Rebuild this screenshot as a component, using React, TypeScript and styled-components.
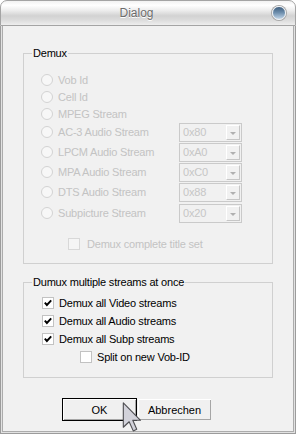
import React from 'react';
import styled, {createGlobalStyle} from "styled-components";

const GlobalStyle = createGlobalStyle`
    html, body {
        margin: 0;
        padding: 0;
        background: #ffffff;
    }
    body {
        font-family: "Liberation Sans", Arial, sans-serif;
        font-size: 11px;
        letter-spacing: -0.2px;
    }
`
const Window = styled.div`
    position: relative;
    width: 296px;
    height: 434px;
    display: flex;
    flex-direction: column;
`
const TitleBar = styled.div`
    height: 24px;
    flex-shrink: 0;
    display: flex;
    align-items: center;
    padding: 0 9px 0 0;
    border: 1px solid #a4a4a4;
    border-radius: 7px 7px 0 0;
    background: linear-gradient(to bottom, #f2f2f2 0%, #ffffff 18%, #ececec 40%, #d2d2d2 62%, #dcdcdc 80%, #eeeeee 100%);
`
const Title = styled.span`
    flex: 1;
    text-align: center;
    font-size: 12px;
    letter-spacing: 0;
    color: #6c6c6c;
    text-shadow: 0 1px 0 #ffffff;
`
const CloseButton = styled.span`
    width: 14px;
    height: 14px;
    box-sizing: border-box;
    border-radius: 50%;
    border: 1px solid #eef2f6;
    box-shadow: 0 0 0 1px #a8a8a8;
    background: linear-gradient(to bottom, #3e5d7c 0%, #6b8cab 45%, #a9c1d8 85%, #c9d8e6 100%);
`
const Body = styled.div`
    flex: 1;
    display: flex;
    flex-direction: column;
    background: #f1f1f1;
    border: 1px solid #9c9c9c;
    border-top: none;
    box-shadow: inset 1px 0 #e2e2e2, inset -1px 0 #e2e2e2, inset 0 -1px #e2e2e2,
    inset 2px 0 #acacac, inset -2px 0 #acacac, inset 0 -2px #acacac;
    padding: 27px 22px 0 22px;
`
const Group = styled.div<{ $pt: number; $pb: number; $pl: number; $mt?: number }>`
    position: relative;
    border: 1px solid #d0d0d0;
    margin-top: ${p => p.$mt || 0}px;
    padding: ${p => p.$pt}px 0 ${p => p.$pb}px ${p => p.$pl}px;
    display: flex;
    flex-direction: column;
`
const Legend = styled.span`
    position: absolute;
    top: -7px;
    left: 8px;
    padding: 0 1px;
    line-height: 13px;
    background: #f1f1f1;
    color: #000;
`
const Row = styled.div<{ $h: number; $mt?: number; $indent?: number }>`
    height: ${p => p.$h}px;
    margin-top: ${p => p.$mt || 0}px;
    margin-left: ${p => p.$indent || 0}px;
    display: flex;
    align-items: center;
`
const StreamRow = styled.div<{ $mt?: number }>`
    height: 20px;
    margin-top: ${p => p.$mt || 0}px;
    display: grid;
    grid-template-columns: 138px 63px;
    align-items: center;
`
const Option = styled.span`
    display: flex;
    align-items: center;
    gap: 5px;
`
const Label = styled.span<{ $disabled?: boolean }>`
    color: ${p => p.$disabled ? '#c3c3c3' : '#000'};
    white-space: nowrap;
`
const Radio = styled.span`
    width: 12px;
    height: 12px;
    box-sizing: border-box;
    border-radius: 50%;
    border: 1px solid #d3d3d3;
    background: #f7f7f7;
    flex-shrink: 0;
`
const CheckBox = styled.span<{ $disabled?: boolean }>`
    width: 12px;
    height: 12px;
    box-sizing: border-box;
    border: 1px solid ${p => p.$disabled ? '#d8d8d8' : '#c2c2c2'};
    background: ${p => p.$disabled ? '#f5f5f5' : '#ffffff'};
    display: flex;
    align-items: center;
    justify-content: center;
    flex-shrink: 0;
`
const Combo = styled.div`
    width: 63px;
    height: 19px;
    box-sizing: border-box;
    border: 1px solid #cacaca;
    padding: 0 1px 0 3px;
    display: flex;
    align-items: center;
    justify-content: space-between;
    color: #c6c6c6;
`
const ComboArrow = styled.span`
    width: 14px;
    height: 15px;
    box-sizing: border-box;
    border: 1px solid;
    border-color: #ffffff #c6c6c6 #c6c6c6 #ffffff;
    display: flex;
    align-items: center;
    justify-content: center;

    &::after {
        content: "";
        border-left: 3px solid transparent;
        border-right: 3px solid transparent;
        border-top: 3px solid #b0b0b0;
        margin-top: 2px;
    }
`
const ButtonRow = styled.div`
    display: flex;
    margin-top: 20px;
    margin-left: 39px;
`
const Button = styled.button<{ $default?: boolean }>`
    width: 75px;
    height: 23px;
    box-sizing: border-box;
    padding: 0;
    font: inherit;
    color: #000;
    background: #f0f0f0;
    border: 1px solid ${p => p.$default ? '#000' : '#f1f1f1'};
    box-shadow: inset 1px 1px #ffffff, inset -1px -1px #a6a6a6;
`
const Cursor = styled.svg`
    position: absolute;
    left: 121px;
    top: 402px;
    pointer-events: none;
`

const Check = () => (
    <svg width="10" height="10" viewBox="0 0 10 10">
        <path d="M1.8 4.6 L3.9 7 L8.2 2.4" fill="none" stroke="#000" strokeWidth="1.9"/>
    </svg>
)

export default function App() {
    const plain = ["Vob Id", "Cell Id", "MPEG Stream"]
    const streams = [
        {name: "AC-3 Audio Stream", value: "0x80"},
        {name: "LPCM Audio Stream", value: "0xA0"},
        {name: "MPA Audio Stream", value: "0xC0"},
        {name: "DTS Audio Stream", value: "0x88"},
        {name: "Subpicture Stream", value: "0x20"},
    ]
    const checked = ["Demux all Video streams", "Demux all Audio streams", "Demux all Subp streams"]
    return (
        <Window>
            <GlobalStyle/>
            <TitleBar>
                <Title>Dialog</Title>
                <CloseButton/>
            </TitleBar>
            <Body>
                <Group $pt={17} $pb={11} $pl={17}>
                    <Legend>Demux</Legend>
                    {plain.map((item, index) => (
                        <Row $h={17} key={index}>
                            <Option><Radio/><Label $disabled>{item}</Label></Option>
                        </Row>
                    ))}
                    {streams.map((item, index) => (
                        <StreamRow key={index} $mt={index === 4 ? 1 : 0}>
                            <Option><Radio/><Label $disabled>{item.name}</Label></Option>
                            <Combo>{item.value}<ComboArrow/></Combo>
                        </StreamRow>
                    ))}
                    <Row $h={17} $mt={12} $indent={27}>
                        <Option style={{gap: 7}}><CheckBox $disabled/><Label $disabled>Demux complete title set</Label></Option>
                    </Row>
                </Group>
                <Group $pt={11} $pb={11} $pl={18} $mt={18}>
                    <Legend>Dumux multiple streams at once</Legend>
                    {checked.map((item, index) => (
                        <Row $h={18} key={index}>
                            <Option><CheckBox><Check/></CheckBox><Label>{item}</Label></Option>
                        </Row>
                    ))}
                    <Row $h={18} $indent={38}>
                        <Option><CheckBox/><Label>Split on new Vob-ID</Label></Option>
                    </Row>
                </Group>
                <ButtonRow>
                    <Button $default>OK</Button>
                    <Button>Abbrechen</Button>
                </ButtonRow>
            </Body>
            <Cursor width="22" height="30" viewBox="0 0 12 19">
                <polygon points="0.5,0.5 0.5,16 4.2,12.5 6.8,18.3 9,17.3 6.5,11.6 11.4,11.6"
                         fill="#d2d2da" stroke="#4e4e52" strokeWidth="0.7" strokeLinejoin="round"/>
            </Cursor>
        </Window>
    );
}
